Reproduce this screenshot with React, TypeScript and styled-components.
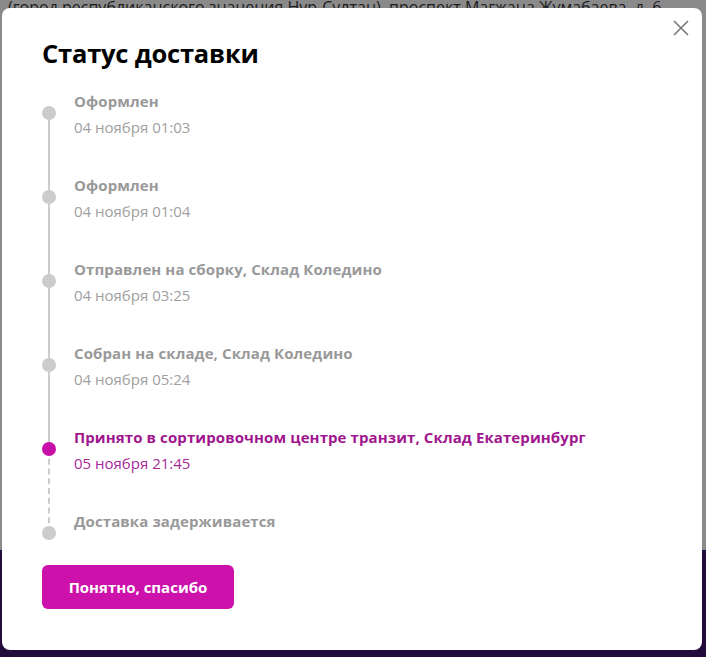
import React from 'react';
import styled, { createGlobalStyle } from 'styled-components';

const GlobalStyle = createGlobalStyle`
  html, body { margin: 0; padding: 0; }
  body {
    width: 706px;
    height: 657px;
    overflow: hidden;
    font-family: "Open Sans", "Noto Sans", sans-serif;
  }
`;

// Trang phía sau, đã bị lớp phủ làm tối
const Page = styled.div`
  position: relative;
  width: 706px;
  height: 657px;
  display: flex;
  flex-direction: column;
  background: #8a8a8a;
  overflow: hidden;
`;

const Address = styled.div`
  padding: 0 8px;
  margin-top: -4px;
  font-size: 16px;
  line-height: 22px;
  color: #1c1c1c;
  white-space: nowrap;
`;

const Spacer = styled.div`
  flex: 1;
`;

const Footer = styled.div`
  height: 107px;
  background: #230b3b;
`;

const Modal = styled.div`
  position: absolute;
  left: 2px;
  top: 8px;
  width: 700px;
  height: 642px;
  box-sizing: border-box;
  padding: 27px 40px 0 40px;
  background: #fff;
  border-radius: 8px;
`;

const Close = styled.button`
  position: absolute;
  top: 11px;
  right: 12px;
  width: 18px;
  height: 18px;
  padding: 0;
  border: none;
  background: none;
  cursor: pointer;
  display: flex;
`;

const Title = styled.h2`
  margin: 0 0 20px 0;
  font-size: 25.5px;
  line-height: 36px;
  font-weight: 700;
  color: #000;
  letter-spacing: -0.2px;
`;

const Timeline = styled.ul`
  list-style: none;
  margin: 0;
  padding: 0;
`;

const Item = styled.li<{ $last?: boolean; $line?: 'solid' | 'dashed' }>`
  position: relative;
  display: flex;
  height: ${p => (p.$last ? 41 : 84)}px;
  padding-left: 32px;

  &::before {
    content: '';
    display: ${p => (p.$line ? 'block' : 'none')};
    position: absolute;
    left: 6px;
    top: 22px;
    height: 84px;
    width: 0;
    border-left: 2px ${p => p.$line ?? 'solid'} #cccccc;
  }
`;

const Dot = styled.span<{ $active?: boolean }>`
  position: absolute;
  left: 0;
  top: 15px;
  width: 14px;
  height: 14px;
  border-radius: 50%;
  background: ${p => (p.$active ? '#c80fa8' : '#cccccc')};
  z-index: 1;
`;

const Content = styled.div`
  display: flex;
  flex-direction: column;
  gap: 6px;
`;

const Name = styled.div<{ $active?: boolean }>`
  font-size: 15px;
  line-height: 20px;
  font-weight: 700;
  letter-spacing: 0.1px;
  color: ${p => (p.$active ? '#a0168f' : '#999')};
`;

const Time = styled.div<{ $active?: boolean }>`
  font-size: 15px;
  line-height: 20px;
  color: ${p => (p.$active ? '#a62a9a' : '#a0a0a0')};
`;

const Button = styled.button`
  margin-top: 13px;
  width: 192px;
  height: 44px;
  border: none;
  border-radius: 6px;
  background: #cc12ab;
  color: #fff;
  font-family: "Open Sans", sans-serif;
  font-size: 15px;
  font-weight: 700;
  letter-spacing: 0;
  cursor: pointer;
`;

type Step = { name: string; time?: string; active?: boolean };

const steps: Step[] = [
  { name: 'Оформлен', time: '04 ноября 01:03' },
  { name: 'Оформлен', time: '04 ноября 01:04' },
  { name: 'Отправлен на сборку, Склад Коледино', time: '04 ноября 03:25' },
  { name: 'Собран на складе, Склад Коледино', time: '04 ноября 05:24' },
  { name: 'Принято в сортировочном центре транзит, Склад Екатеринбург', time: '05 ноября 21:45', active: true },
  { name: 'Доставка задерживается' },
];

const App: React.FC = () => {
  const activeIndex = steps.findIndex(s => s.active);
  return (
    <>
      <GlobalStyle />
      <Page>
        <Address>(город республиканского значения Нур-Султан), проспект Магжана Жумабаева, д. 6</Address>
        <Spacer />
        <Footer />
        <Modal>
          <Close aria-label="Закрыть">
            <svg width="18" height="18" viewBox="0 0 18 18">
              <path d="M2 2 L16 16 M16 2 L2 16" stroke="#777" strokeWidth="1.6" fill="none" />
            </svg>
          </Close>
          <Title>Статус доставки</Title>
          <Timeline>
            {steps.map((s, i) => {
              const last = i === steps.length - 1;
              const line = last ? undefined : i >= activeIndex ? 'dashed' : 'solid';
              return (
                <Item key={i} $last={last} $line={line}>
                  <Dot $active={s.active} />
                  <Content>
                    <Name $active={s.active}>{s.name}</Name>
                    {s.time && <Time $active={s.active}>{s.time}</Time>}
                  </Content>
                </Item>
              );
            })}
          </Timeline>
          <Button>Понятно, спасибо</Button>
        </Modal>
      </Page>
    </>
  );
};

export default App;
